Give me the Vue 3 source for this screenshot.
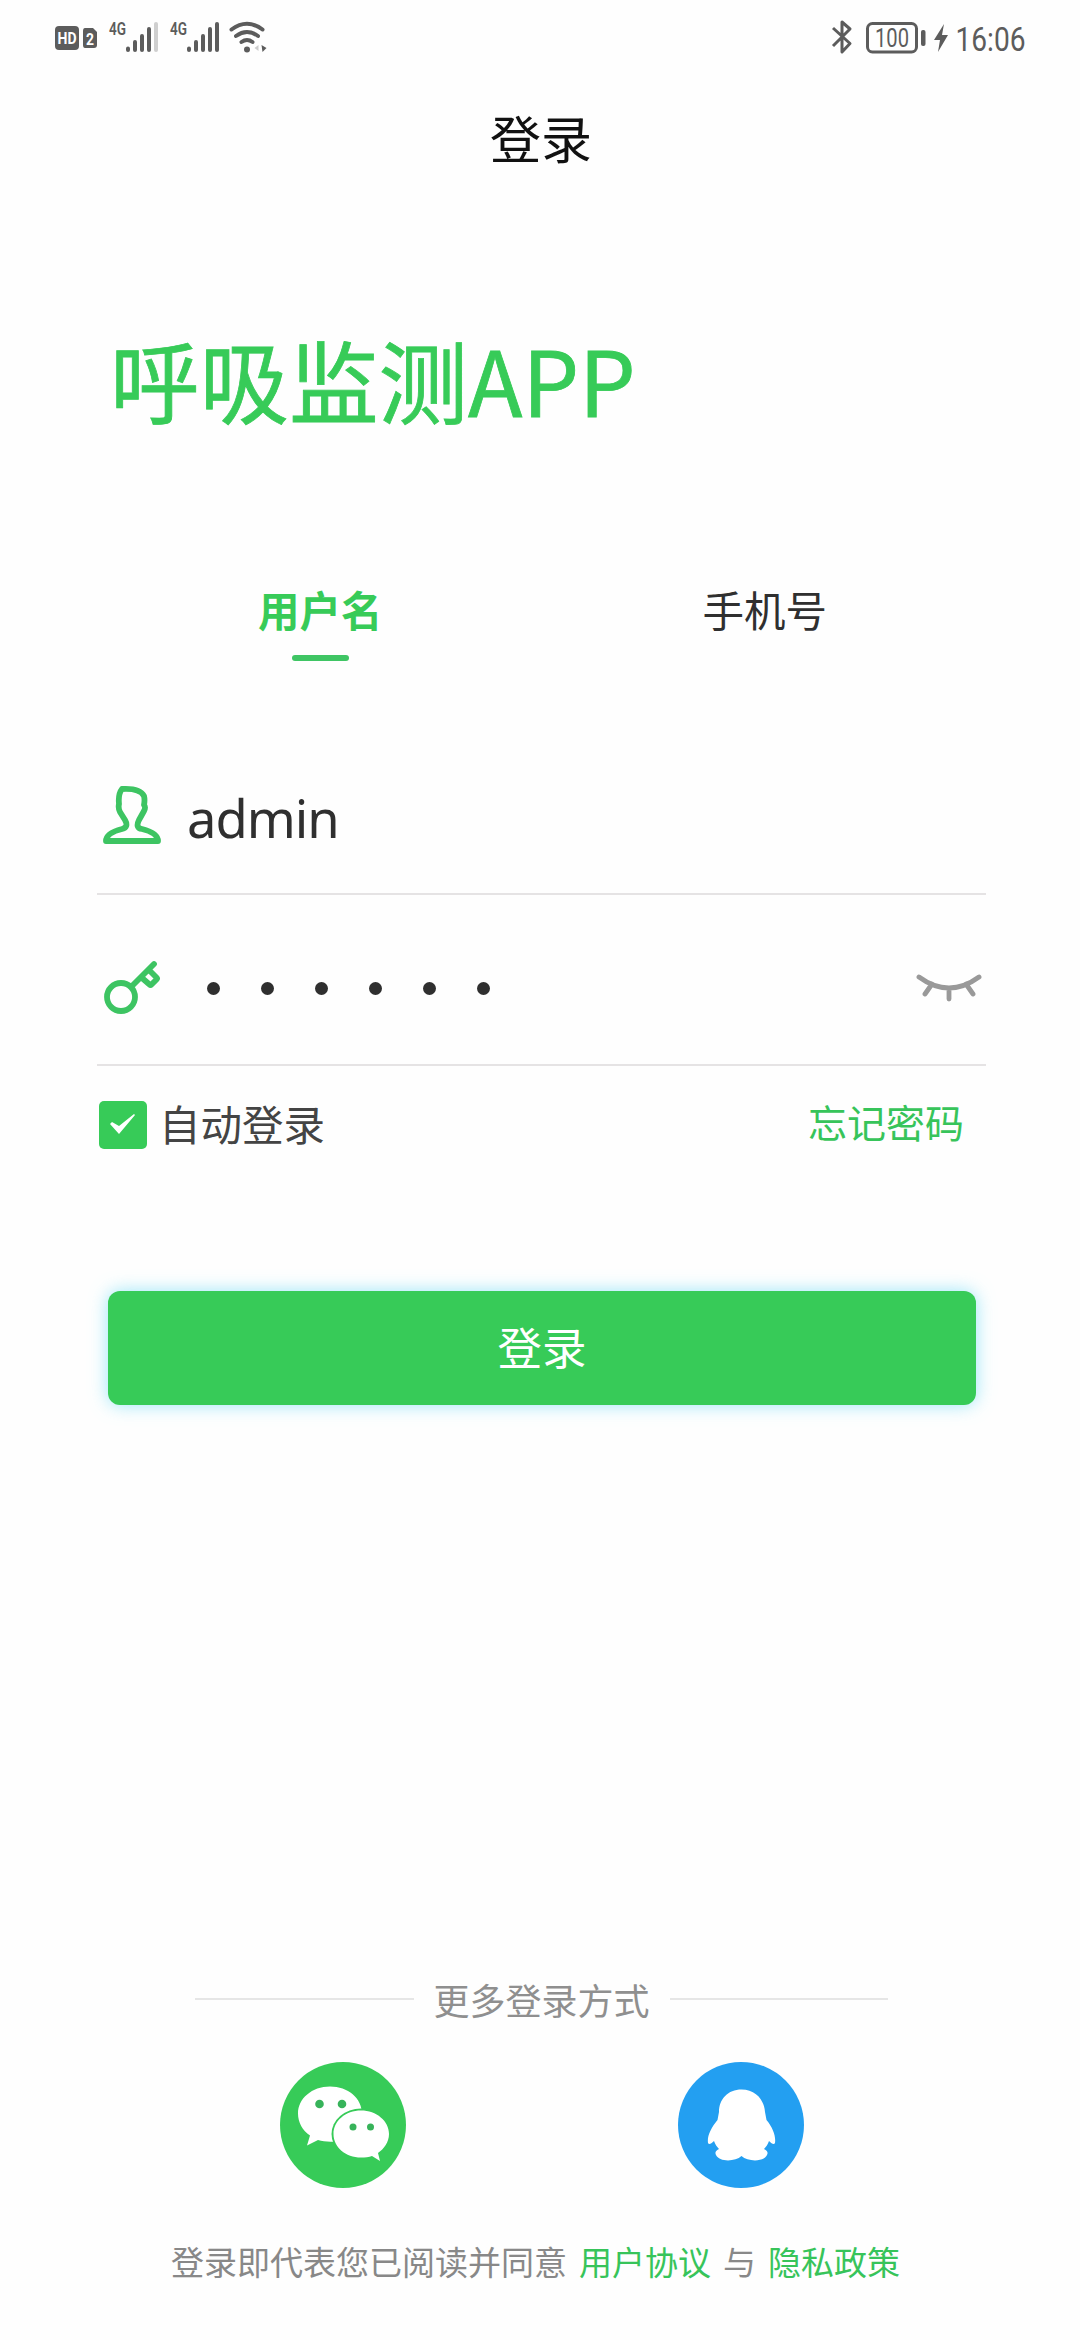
<script setup>
import { ref } from 'vue'

const tabs = ['用户名', '手机号']
const activeTab = ref(0)
const username = ref('admin')
const passwordLength = ref(6)
const autoLogin = ref(true)
</script>

<template>
  <div class="page">
    <!-- 状态栏 -->
    <div class="status-bar">
      <svg class="status-left" viewBox="0 0 230 76" fill="#5c5c5c">
        <rect x="15" y="26" width="24" height="24" rx="4" />
        <text x="17.5" y="44" font-size="17" font-weight="700" fill="#fff" textLength="19" lengthAdjust="spacingAndGlyphs">HD</text>
        <path d="M45 28h8l4 4v13q0 3-3 3h-9q-2 0-2-3V31q0-3 2-3z" />
        <text x="46" y="44.500" font-size="17" font-weight="700" fill="#fff" textLength="8" lengthAdjust="spacingAndGlyphs">2</text>
        <g v-for="n in 2" :key="n" :transform="`translate(${(n - 1) * 61} 0)`">
          <text x="69" y="35" font-size="18" font-weight="600" textLength="17" lengthAdjust="spacingAndGlyphs">4G</text>
          <g stroke="#5c5c5c" stroke-width="4" stroke-linecap="round">
            <path d="M88 48.500v1.500M95 42v8M102 36v14M109 29v21" />
            <path d="M116 24v26" :stroke="n === 1 ? '#cfcfcf' : '#5c5c5c'" />
          </g>
        </g>
        <g fill="none" stroke="#5c5c5c" stroke-width="4" stroke-linecap="round">
          <path d="M191.500 29.500q15.500-11.500 31 0M196 36q11-8 22 0M201.500 42q5.500-4 11 0" />
        </g>
        <circle cx="207" cy="49.500" r="3" />
        <path d="M221.500 45l5 3-4 4z" />
        <path d="M218.500 45v6l-4-3z" fill="#ccc" />
      </svg>
      <svg class="status-right" viewBox="0 0 230 76" fill="#5c5c5c">
        <path d="M3 28l17 15.500-8 8.500V22l8 7L3 46" fill="none" stroke="#5c5c5c" stroke-width="3" stroke-linejoin="round" />
        <rect x="37.500" y="23.500" width="49" height="28.500" rx="5" fill="none" stroke="#5c5c5c" stroke-width="3" />
        <text x="45" y="46.500" font-size="26" textLength="34" lengthAdjust="spacingAndGlyphs">100</text>
        <rect x="91" y="30" width="4.500" height="16" rx="2" />
        <path d="M114 24l-10 16h6l-2 12 10-17h-6z" />
        <text x="125.500" y="51" font-size="34" textLength="70" lengthAdjust="spacingAndGlyphs">16:06</text>
      </svg>
    </div>

    <div class="nav-title">登录</div>

    <h1 class="brand">呼吸监测APP</h1>

    <!-- 登录方式切换 -->
    <div class="tabs">
      <div
        v-for="(tab, i) in tabs"
        :key="tab"
        class="tab"
        :class="{ active: activeTab === i }"
        @click="activeTab = i"
      >
        {{ tab }}
      </div>
    </div>

    <!-- 表单 -->
    <div class="form">
      <div class="field">
        <svg class="field-icon" viewBox="0 0 60 60">
          <path d="M20 4q18-1 22 7 1 4 0 9 2 2 0 6l-5 9q-4 8 3 9 16 4 16 12H4q0-8 16-12 7-2 3-9l-5-8q-2-4-1-8-1-10 3-15z" />
        </svg>
        <span class="username">{{ username }}</span>
      </div>
      <div class="field password">
        <svg class="field-icon" viewBox="0 0 60 60">
          <circle cx="19" cy="38" r="14" />
          <path d="M29.500 27.500L52 5M39.500 18.500l8 7q1 1 2 0l5-5q1-1 0-2l-6-6" />
        </svg>
        <div class="dots">
          <i v-for="n in passwordLength" :key="n" class="dot"></i>
        </div>
        <svg class="eye" viewBox="0 0 66 30">
          <path d="M3 3q30 22 60 0M16 10l-7 10M33 14v11M50 10l7 10" />
        </svg>
      </div>
    </div>

    <div class="options">
      <label class="auto" @click="autoLogin = !autoLogin">
        <span class="checkbox">
          <svg v-if="autoLogin" viewBox="0 0 48 48">
            <path d="M11 23l2-2 7 4 15-12 1 1-16 19z" />
          </svg>
        </span>
        <span class="auto-label">自动登录</span>
      </label>
      <a class="forgot">忘记密码</a>
    </div>

    <button class="submit">登录</button>

    <!-- 第三方登录 -->
    <div class="footer">
      <div class="divider">更多登录方式</div>
      <div class="socials">
        <svg class="social" viewBox="0 0 126 126">
          <circle cx="63" cy="63" r="63" fill="#37cb58" />
          <path d="M50 24.500c-18 0-32 12-32 27 0 9 4.500 17 12 22l-3 10 11-5.500c5 1.500 11 2 17 1.500 14 0 27-12 27-27.500 0-16-14-27.500-32-27.500z" fill="#fff" />
          <ellipse cx="81" cy="72" rx="29.500" ry="25.500" fill="#37cb58" />
          <path d="M81 48.500c-15.500 0-27.500 10.500-27.500 23.500S65.500 95.500 81 95.500c4 0 8-.5 11-1.500l8 5-2-8c6-4 11-11 11-19 0-13-12.500-23.500-28-23.500z" fill="#fff" />
          <g fill="#37b35a">
            <circle cx="39.500" cy="42" r="4.300" />
            <circle cx="62" cy="42" r="4.300" />
            <circle cx="73" cy="65" r="3.500" />
            <circle cx="90.500" cy="65" r="3.500" />
          </g>
        </svg>
        <svg class="social" viewBox="0 0 126 126">
          <circle cx="63" cy="63" r="63" fill="#239ff1" />
          <path d="M63.500 27.500C50 27.500 41 37 41 50l-1.500 8C33 66 29 74 30 81c1 2 3 1 6-2 1 3 3 6 5 8-4 2-4 4-3 6 3 7 19 7 25.500 1 6.500 6 22.500 6 25.500-1 1-2 1-4-3-6 2-2 4-5 5-8 3 3 5 4 6 2 1-7-2-15-8.500-23L87 50c-1-13-10-22.500-23.500-22.500z" fill="#fff" />
        </svg>
      </div>
      <div class="agreement">
        <span>登录即代表您已阅读并同意</span>
        <a>用户协议</a>
        <span>与</span>
        <a>隐私政策</a>
      </div>
    </div>
  </div>
</template>

<style>
body {
  margin: 0;
  background: #fefefe;
}
</style>

<style scoped>
.page {
  display: flex;
  flex-direction: column;
  width: 1080px;
  height: 2340px;
  box-sizing: border-box;
  padding-bottom: 55px;
  overflow: hidden;
  background: #fefefe;
  font-family: "Noto Sans CJK SC", sans-serif;
  color: #2f2f2f;
}

.status-bar {
  display: flex;
  justify-content: space-between;
  height: 76px;
  padding: 0 20px 0 40px;
  font-family: Roboto, sans-serif;
}

.status-left { width: 230px; height: 76px; }
.status-right { width: 230px; height: 76px; }

.nav-title {
  height: 130px;
  line-height: 123px;
  text-align: center;
  text-indent: 2px;
  font-size: 51px;
  color: #111;
}

.brand {
  margin: 0;
  padding: 104px 0 0 110px;
  font-size: 89.5px;
  line-height: 136px;
  font-weight: 400;
  color: #37cb58;
  -webkit-text-stroke: 0.8px #37cb58;
}

.tabs {
  display: flex;
  margin: 118px 93px 0 98px;
}

.tab {
  flex: 1;
  display: flex;
  flex-direction: column;
  align-items: center;
  height: 97px;
  font-size: 41.5px;
  line-height: 90px;
}

.tab.active {
  font-weight: 700;
  color: #37cb58;
}

.tab.active::after {
  content: '';
  width: 57px;
  height: 6px;
  margin-top: 1px;
  border-radius: 3px;
  background: #3fc564;
}

.form {
  margin: 75px 94px 0 97px;
}

.field {
  box-sizing: border-box;
  display: flex;
  align-items: center;
  height: 159px;
  border-bottom: 2px solid #e5e3e4;
}

.field.password {
  height: 171px;
  padding-top: 18px;
}

.field-icon {
  width: 60px;
  height: 60px;
  margin-left: 5px;
  fill: none;
  stroke: #3dc462;
  stroke-width: 5.8;
  stroke-linecap: round;
  stroke-linejoin: round;
}

.username {
  padding-top: 6px;
  margin-left: 25px;
  font-family: "Noto Sans", sans-serif;
  font-size: 52.5px;
  letter-spacing: -1px;
}

.dots {
  display: flex;
  gap: 41px;
  margin-left: 45px;
}

.dot {
  width: 13px;
  height: 13px;
  border-radius: 50%;
  background: #2f2f2f;
}

.eye {
  width: 66px;
  height: 30px;
  margin-left: auto;
  margin-right: 4px;
  fill: none;
  stroke: #999;
  stroke-width: 4.8;
  stroke-linecap: round;
}

.options {
  display: flex;
  justify-content: space-between;
  align-items: center;
  height: 60px;
  margin: 29px 116px 0 99px;
}

.auto {
  display: flex;
  align-items: center;
  gap: 12px;
  font-size: 41.5px;
  color: #444;
}

.auto-label { padding-bottom: 4px; }

.checkbox {
  width: 48px;
  height: 48px;
  border-radius: 5px;
  background: #37cb58;
}

.checkbox svg { display: block; }
.checkbox path { fill: #fff; }

.forgot {
  padding-bottom: 8px;
  font-size: 39px;
  color: #37c45a;
}

.submit {
  height: 114px;
  margin: 136px 104px 0 108px;
  padding: 0 0 5px;
  border: none;
  border-radius: 12px;
  background: #37cb58;
  box-shadow: 0 0 18px rgba(90, 215, 245, 0.6);
  font-family: inherit;
  font-size: 44.5px;
  color: #fff;
}

.footer {
  margin-top: auto;
}

.divider {
  display: flex;
  align-items: center;
  gap: 20px;
  margin: 0 192px 0 195px;
  font-size: 36px;
  line-height: 52px;
  color: #8f8f8f;
}

.divider::before,
.divider::after {
  content: '';
  flex: 1;
  height: 2px;
  background: #e6e6e6;
}

.socials {
  display: flex;
  gap: 272px;
  margin: 37px 0 0 280px;
}

.social {
  width: 126px;
  height: 126px;
}

.agreement {
  display: flex;
  gap: 12px;
  margin: 49px 0 0 171px;
  font-size: 33px;
  line-height: 48px;
  color: #888;
}

.agreement a { color: #37c45a; }
</style>
